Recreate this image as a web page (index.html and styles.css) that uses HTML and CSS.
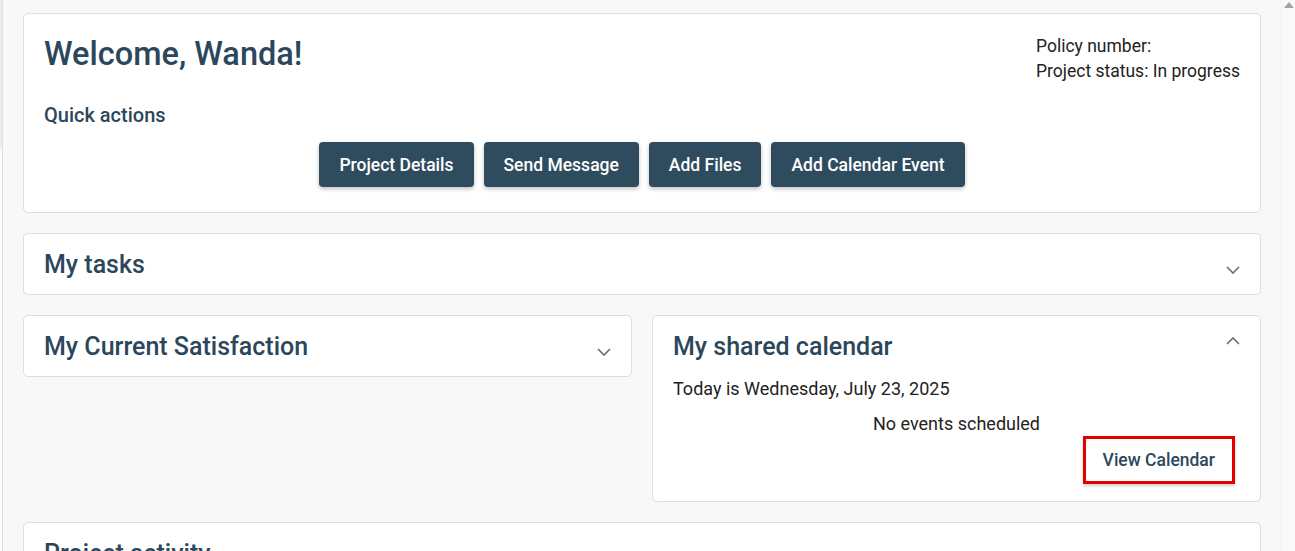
FILE: index.html
```html
<!DOCTYPE html>
<html lang="en">
<head>
    <meta charset="UTF-8">
    <meta name="viewport" content="width=device-width, initial-scale=1.0">
    <title>Client portal</title>
    <link rel="stylesheet" href="styles.css">
</head>
<body>
    <div class="screen">
        <div class="rail"><div class="rail-top"></div></div>

        <main class="content">
            <section class="card welcome">
                <div class="welcome-head">
                    <h1>Welcome, Wanda!</h1>
                    <div class="policy">
                        <p>Policy number:</p>
                        <p>Project status: In progress</p>
                    </div>
                </div>
                <h2 class="quick-title">Quick actions</h2>
                <div class="actions">
                    <button class="action">Project Details</button>
                    <button class="action">Send Message</button>
                    <button class="action">Add Files</button>
                    <button class="action">Add Calendar Event</button>
                </div>
            </section>

            <section class="card panel">
                <div class="panel-head">
                    <h2>My tasks</h2>
                    <svg class="chev down" width="14" height="8" viewBox="0 0 14 8"><polyline points="1,1 7,7 13,1"/></svg>
                </div>
            </section>

            <div class="row">
                <section class="card panel">
                    <div class="panel-head">
                        <h2>My Current Satisfaction</h2>
                        <svg class="chev down" width="14" height="8" viewBox="0 0 14 8"><polyline points="1,1 7,7 13,1"/></svg>
                    </div>
                </section>

                <section class="card panel calendar">
                    <div class="panel-head">
                        <h2>My shared calendar</h2>
                        <svg class="chev up" width="14" height="8" viewBox="0 0 14 8"><polyline points="1,7 7,1 13,7"/></svg>
                    </div>
                    <p class="today">Today is Wednesday, July 23, 2025</p>
                    <p class="no-events">No events scheduled</p>
                    <div class="calendar-foot">
                        <button class="view-btn">View Calendar</button>
                    </div>
                </section>
            </div>

            <section class="card panel">
                <div class="panel-head">
                    <h2>Project activity</h2>
                </div>
            </section>
        </main>

        <div class="scrollbar"><span class="scroll-up"></span></div>
    </div>
</body>
</html>
```

FILE: styles.css
```css
html, body {
    height: 100%;
    overflow: hidden;
}
body {
    margin: 0;
    background: #f8f8f8;
    font-family: Roboto, "Liberation Sans", sans-serif;
    color: #222;
}
p, h1, h2 {
    margin: 0;
}
.screen {
    display: flex;
    height: 100%;
}
.rail {
    width: 2px;
    flex-shrink: 0;
    border-right: 1px solid #dedede;
    background: #fafafa;
}
.rail-top {
    height: 148px;
    background: #ebebeb;
}
.content {
    flex: 1;
    padding: 13px 20px 0 20px;
}
.scrollbar {
    width: 13px;
    flex-shrink: 0;
    background: #f9f9f9;
    border-left: 1px solid #f1f1f1;
    display: flex;
    justify-content: center;
}
.scroll-up {
    margin-top: 2px;
    width: 0;
    height: 0;
    border-left: 5px solid transparent;
    border-right: 5px solid transparent;
    border-bottom: 6px solid #a3a3a3;
}

/* kaarten */
.card {
    background: #fff;
    border: 1px solid #dedede;
    border-radius: 5px;
    margin-bottom: 20px;
}
.welcome {
    padding: 20px 20px 25px 20px;
}
.welcome-head {
    display: flex;
    justify-content: space-between;
    align-items: flex-start;
}
.welcome h1 {
    font-size: 32.5px;
    font-weight: 500;
    line-height: 40px;
    color: #2c475b;
}
.policy {
    font-size: 17.5px;
    line-height: 25px;
    color: #222;
}
.quick-title {
    margin-top: 19px;
    font-size: 20px;
    font-weight: 500;
    line-height: 24px;
    color: #2c475b;
}
.actions {
    display: flex;
    justify-content: center;
    gap: 10px;
    margin-top: 15px;
}
.action {
    height: 45px;
    padding: 0 20px;
    border: none;
    border-radius: 4px;
    background: #2f4c5f;
    color: #fff;
    font-family: Roboto, "Liberation Sans", sans-serif;
    font-size: 17.5px;
    font-weight: 500;
    box-shadow: 0 2px 4px rgba(0, 0, 0, 0.25);
}

.panel {
    padding: 16px 20px 14px 20px;
}
.panel-head {
    display: flex;
    justify-content: space-between;
    align-items: center;
}
.panel-head h2 {
    font-size: 25px;
    font-weight: 500;
    line-height: 30px;
    color: #2c475b;
}
.chev {
    fill: none;
    stroke: #6b6b6b;
    stroke-width: 1.6;
}
.chev.down {
    margin-top: 9px;
}
.chev.up {
    margin-top: -12px;
}

.row {
    display: grid;
    grid-template-columns: 1fr 1fr;
    gap: 20px;
    align-items: start;
}
.calendar {
    padding-bottom: 17px;
}
.today {
    margin-top: 15px;
    font-size: 18px;
    line-height: 24px;
}
.no-events {
    margin-top: 11px;
    font-size: 18px;
    line-height: 24px;
    text-align: center;
}
.calendar-foot {
    display: flex;
    justify-content: flex-end;
}
.view-btn {
    height: 48px;
    padding: 0 17px;
    margin-right: 5px;
    background: #fff;
    border: 3px solid #e30000;
    color: #2c475b;
    font-family: Roboto, "Liberation Sans", sans-serif;
    font-size: 17.5px;
    font-weight: 500;
    box-shadow: 0 2px 3px rgba(0, 0, 0, 0.2);
}
```
